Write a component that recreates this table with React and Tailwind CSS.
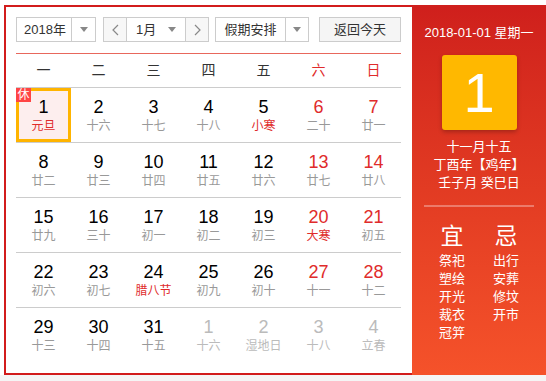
const WEEK = ['一', '二', '三', '四', '五', '六', '日'];

// [day, lunar, kind] kind: 'w' weekend, 'f' festival text red, 'o' other month
const DAYS = [
  [1, '元旦', 'f'], [2, '十六'], [3, '十七'], [4, '十八'], [5, '小寒', 'f'], [6, '二十', 'w'], [7, '廿一', 'w'],
  [8, '廿二'], [9, '廿三'], [10, '廿四'], [11, '廿五'], [12, '廿六'], [13, '廿七', 'w'], [14, '廿八', 'w'],
  [15, '廿九'], [16, '三十'], [17, '初一'], [18, '初二'], [19, '初三'], [20, '大寒', 'wf'], [21, '初五', 'w'],
  [22, '初六'], [23, '初七'], [24, '腊八节', 'f'], [25, '初九'], [26, '初十'], [27, '十一', 'w'], [28, '十二', 'w'],
  [29, '十三'], [30, '十四'], [31, '十五'], [1, '十六', 'o'], [2, '湿地日', 'o'], [3, '十八', 'o'], [4, '立春', 'o'],
];

const YI = ['祭祀', '塑绘', '开光', '裁衣', '冠笄'];
const JI = ['出行', '安葬', '修坟', '开市'];

function Caret() {
  return <span className="inline-block w-0 h-0 border-l-[4px] border-r-[4px] border-t-[5px] border-l-transparent border-r-transparent border-t-[#888]" />;
}

function Chevron({ right }) {
  return (
    <svg width="7" height="12" viewBox="0 0 7 12">
      <path d={right ? 'M1 1l5 5-5 5' : 'M6 1L1 6l5 5'} fill="none" stroke="#888" strokeWidth="1.2" />
    </svg>
  );
}

function Cell({ d, i }) {
  const [day, lunar, kind = ''] = d;
  const other = kind.includes('o');
  const weekend = kind.includes('w');
  const fest = kind.includes('f');
  const numColor = other ? 'text-[#bbb]' : weekend ? 'text-[#e02b2b]' : 'text-black';
  const lunColor = other ? 'text-[#bbb]' : fest ? 'text-[#e02b2b]' : 'text-[#999]';
  const selected = i === 0;
  return (
    <div className={`relative flex flex-col items-center justify-center ${selected ? 'border-[3px] border-[#ffb400] bg-[#fdeeee]' : ''}`}>
      {selected && (
        <span className="absolute -left-[3px] -top-[3px] w-[15px] h-[14px] bg-[#f44] text-white text-[12px] leading-[14px] text-center">休</span>
      )}
      <span className={`text-[18px] leading-[20px] ${numColor}`}>{day}</span>
      <span className={`text-[12px] leading-[16px] mt-[1px] ${lunColor}`}>{lunar}</span>
    </div>
  );
}

export default function App() {
  const rows = [0, 1, 2, 3, 4].map((r) => DAYS.slice(r * 7, r * 7 + 7));
  return (
    <div className="w-[546px] h-[381px] bg-white flex flex-col" style={{ fontFamily: '"Liberation Sans", "Noto Sans CJK SC", sans-serif' }}>
      <div className="mt-[5px] ml-[4px] flex h-[370px]">
        <div className="w-[408px] border-l-2 border-t-2 border-b-2 border-[#d21c1c] pl-[10px] pt-[10px] pr-[11px]">
          <div className="flex items-stretch h-[25px] text-[13px] text-[#333]">
            <div className="flex w-[80px] border border-[#ccc]">
              <span className="flex-1 flex items-center justify-center pl-[2px]">2018年</span>
              <span className="w-[24px] border-l border-[#ccc] flex items-center justify-center"><Caret /></span>
            </div>
            <div className="flex ml-[7px] w-[106px] border border-[#ccc]">
              <span className="w-[23px] bg-[#f7f7f7] border-r border-[#ccc] flex items-center justify-center"><Chevron /></span>
              <span className="flex-1 flex items-center justify-between pl-[9px] pr-[9px]">1月<Caret /></span>
              <span className="w-[23px] bg-[#f7f7f7] border-l border-[#ccc] flex items-center justify-center"><Chevron right /></span>
            </div>
            <div className="flex ml-[6px] w-[94px] border border-[#ccc]">
              <span className="flex-1 flex items-center justify-center">假期安排</span>
              <span className="w-[23px] border-l border-[#ccc] flex items-center justify-center"><Caret /></span>
            </div>
            <div className="ml-auto w-[82px] border border-[#ccc] bg-[#f5f5f5] flex items-center justify-center">返回今天</div>
          </div>
          <div className="mt-[11px] border-t border-[#e8675c]" />
          <div className="grid grid-cols-7 h-[34px] border-b border-[#ccc] text-[14px] items-center text-center">
            {WEEK.map((w, i) => (
              <span key={w} className={i >= 5 ? 'text-[#e02b2b]' : 'text-[#333]'}>{w}</span>
            ))}
          </div>
          {rows.map((row, r) => (
            <div key={r} className={`grid grid-cols-7 h-[55px] ${r < 4 ? 'border-b border-[#ccc]' : ''}`}>
              {row.map((d, c) => (
                <Cell key={c} d={d} i={r * 7 + c} />
              ))}
            </div>
          ))}
        </div>
        <div className="w-[134px] bg-gradient-to-b from-[#cf1f1c] to-[#f5522a] text-white flex flex-col items-center">
          <div className="mt-[20px] text-[13px] leading-[16px]">2018-01-01 星期一</div>
          <div className="mt-[14px] w-[75px] h-[75px] rounded-[3px] bg-[#ffb800] shadow-[0_2px_4px_rgba(0,0,0,0.25)] flex items-center justify-center text-[56px] font-light leading-none">1</div>
          <div className="mt-[8px] text-[13px] leading-[18px] text-center">
            <div>十一月十五</div>
            <div>丁酉年【鸡年】</div>
            <div>壬子月 癸巳日</div>
          </div>
          <div className="mt-[13px] w-[110px] h-[2px] bg-[#ec7b6b]" />
          <div className="mt-[16px] flex gap-[28px] text-[13px] leading-[18px]">
            <div className="flex flex-col items-center">
              <span className="text-[23px] leading-[26px] mb-[3px]">宜</span>
              {YI.map((y) => <span key={y}>{y}</span>)}
            </div>
            <div className="flex flex-col items-center">
              <span className="text-[23px] leading-[26px] mb-[3px]">忌</span>
              {JI.map((y) => <span key={y}>{y}</span>)}
            </div>
          </div>
        </div>
      </div>
      <div className="flex-1 bg-[#f5f5f5]" />
    </div>
  );
}
